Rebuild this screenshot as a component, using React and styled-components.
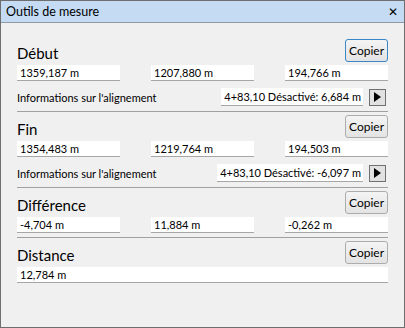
import React from 'react';
import styled, { createGlobalStyle } from 'styled-components';

const GlobalStyle = createGlobalStyle`
  html, body {
    margin: 0;
    padding: 0;
    background: #f0f0f0;
  }
  body {
    font-family: Lato, "Noto Sans", sans-serif;
    color: #000;
  }
`;

const Window = styled.div`
  width: 405px;
  height: 328px;
  box-sizing: border-box;
  border: 1px solid #6e6e6e;
  background: #f0f0f0;
  display: flex;
  flex-direction: column;
`;

const TitleBar = styled.div`
  height: 21px;
  background: #c4dbf3;
  border-bottom: 1px solid #8e9aa6;
  display: flex;
  align-items: center;
  justify-content: space-between;
  padding: 0 6px 0 5px;
  font-size: 12.5px;
`;

const Close = styled.span`
  font-family: "DejaVu Sans", sans-serif;
  font-size: 12px;
  font-weight: bold;
  line-height: 1;
`;

const Body = styled.div`
  padding: 16px 16px 0 16px;
  display: flex;
  flex-direction: column;
`;

const Section = styled.section`
  display: flex;
  flex-direction: column;
  padding-bottom: ${(p) => (p.$info ? '5px' : '4px')};
  border-bottom: ${(p) => (p.$last ? 'none' : '1px solid #a0a0a0')};
  margin-bottom: 3px;
`;

const Header = styled.div`
  display: flex;
  align-items: flex-end;
  justify-content: space-between;
  height: 23px;
  margin-bottom: 3px;
`;

const Heading = styled.h2`
  margin: 0;
  font-size: 15px;
  font-weight: normal;
  line-height: 18px;
`;

const CopyButton = styled.button`
  width: 43px;
  height: 23px;
  padding: 0;
  font-family: inherit;
  font-size: 12px;
  color: #000;
  border-radius: 3px;
  border: 1px solid ${(p) => (p.$focused ? '#3b86c6' : '#acacac')};
  background: linear-gradient(#f4f4f4, #e3e3e3);
  align-self: flex-start;
`;

const Fields = styled.div`
  display: grid;
  grid-template-columns: ${(p) => (p.$single ? '1fr' : 'repeat(3, 1fr)')};
  column-gap: 31px;
`;

const Field = styled.div`
  height: 15px;
  background: #fff;
  border-bottom: 1px solid #a6a6a6;
  font-size: 11px;
  line-height: 15px;
  padding-left: 3px;
  white-space: nowrap;
`;

const InfoRow = styled.div`
  display: flex;
  align-items: center;
  margin-top: 7px;
  height: 18px;
`;

const InfoLabel = styled.span`
  font-size: 11px;
  flex: 1;
`;

const InfoField = styled.span`
  background: #fff;
  border-bottom: 1px solid #a6a6a6;
  font-size: 11px;
  line-height: 17px;
  height: 17px;
  padding: 0 2px 0 3px;
  white-space: nowrap;
`;

const ArrowButton = styled.button`
  width: 17px;
  height: 17px;
  margin: 0 2px 0 6px;
  padding: 0;
  border: 1px solid #707070;
  background: #e1e1e1;
  display: flex;
  align-items: center;
  justify-content: center;
`;

const sections = [
  {
    title: 'Début',
    values: ['1359,187 m', '1207,880 m', '194,766 m'],
    info: '4+83,10 Désactivé: 6,684 m',
    focused: true,
  },
  {
    title: 'Fin',
    values: ['1354,483 m', '1219,764 m', '194,503 m'],
    info: '4+83,10 Désactivé: -6,097 m',
  },
  {
    title: 'Différence',
    values: ['-4,704 m', '11,884 m', '-0,262 m'],
  },
  {
    title: 'Distance',
    values: ['12,784 m'],
    single: true,
    last: true,
  },
];

export default function App() {
  return (
    <>
      <GlobalStyle />
      <Window>
        <TitleBar>
          <span>Outils de mesure</span>
          <Close>✕</Close>
        </TitleBar>
        <Body>
          {sections.map((s) => (
            <Section key={s.title} $last={s.last} $info={!!s.info}>
              <Header>
                <Heading>{s.title}</Heading>
                <CopyButton $focused={s.focused}>Copier</CopyButton>
              </Header>
              <Fields $single={s.single}>
                {s.values.map((v) => (
                  <Field key={v}>{v}</Field>
                ))}
              </Fields>
              {s.info && (
                <InfoRow>
                  <InfoLabel>Informations sur l'alignement</InfoLabel>
                  <InfoField>{s.info}</InfoField>
                  <ArrowButton>
                    <svg width="7" height="10" viewBox="0 0 7 10">
                      <path d="M0 0 L7 5 L0 10 Z" fill="#000" />
                    </svg>
                  </ArrowButton>
                </InfoRow>
              )}
            </Section>
          ))}
        </Body>
      </Window>
    </>
  );
}
